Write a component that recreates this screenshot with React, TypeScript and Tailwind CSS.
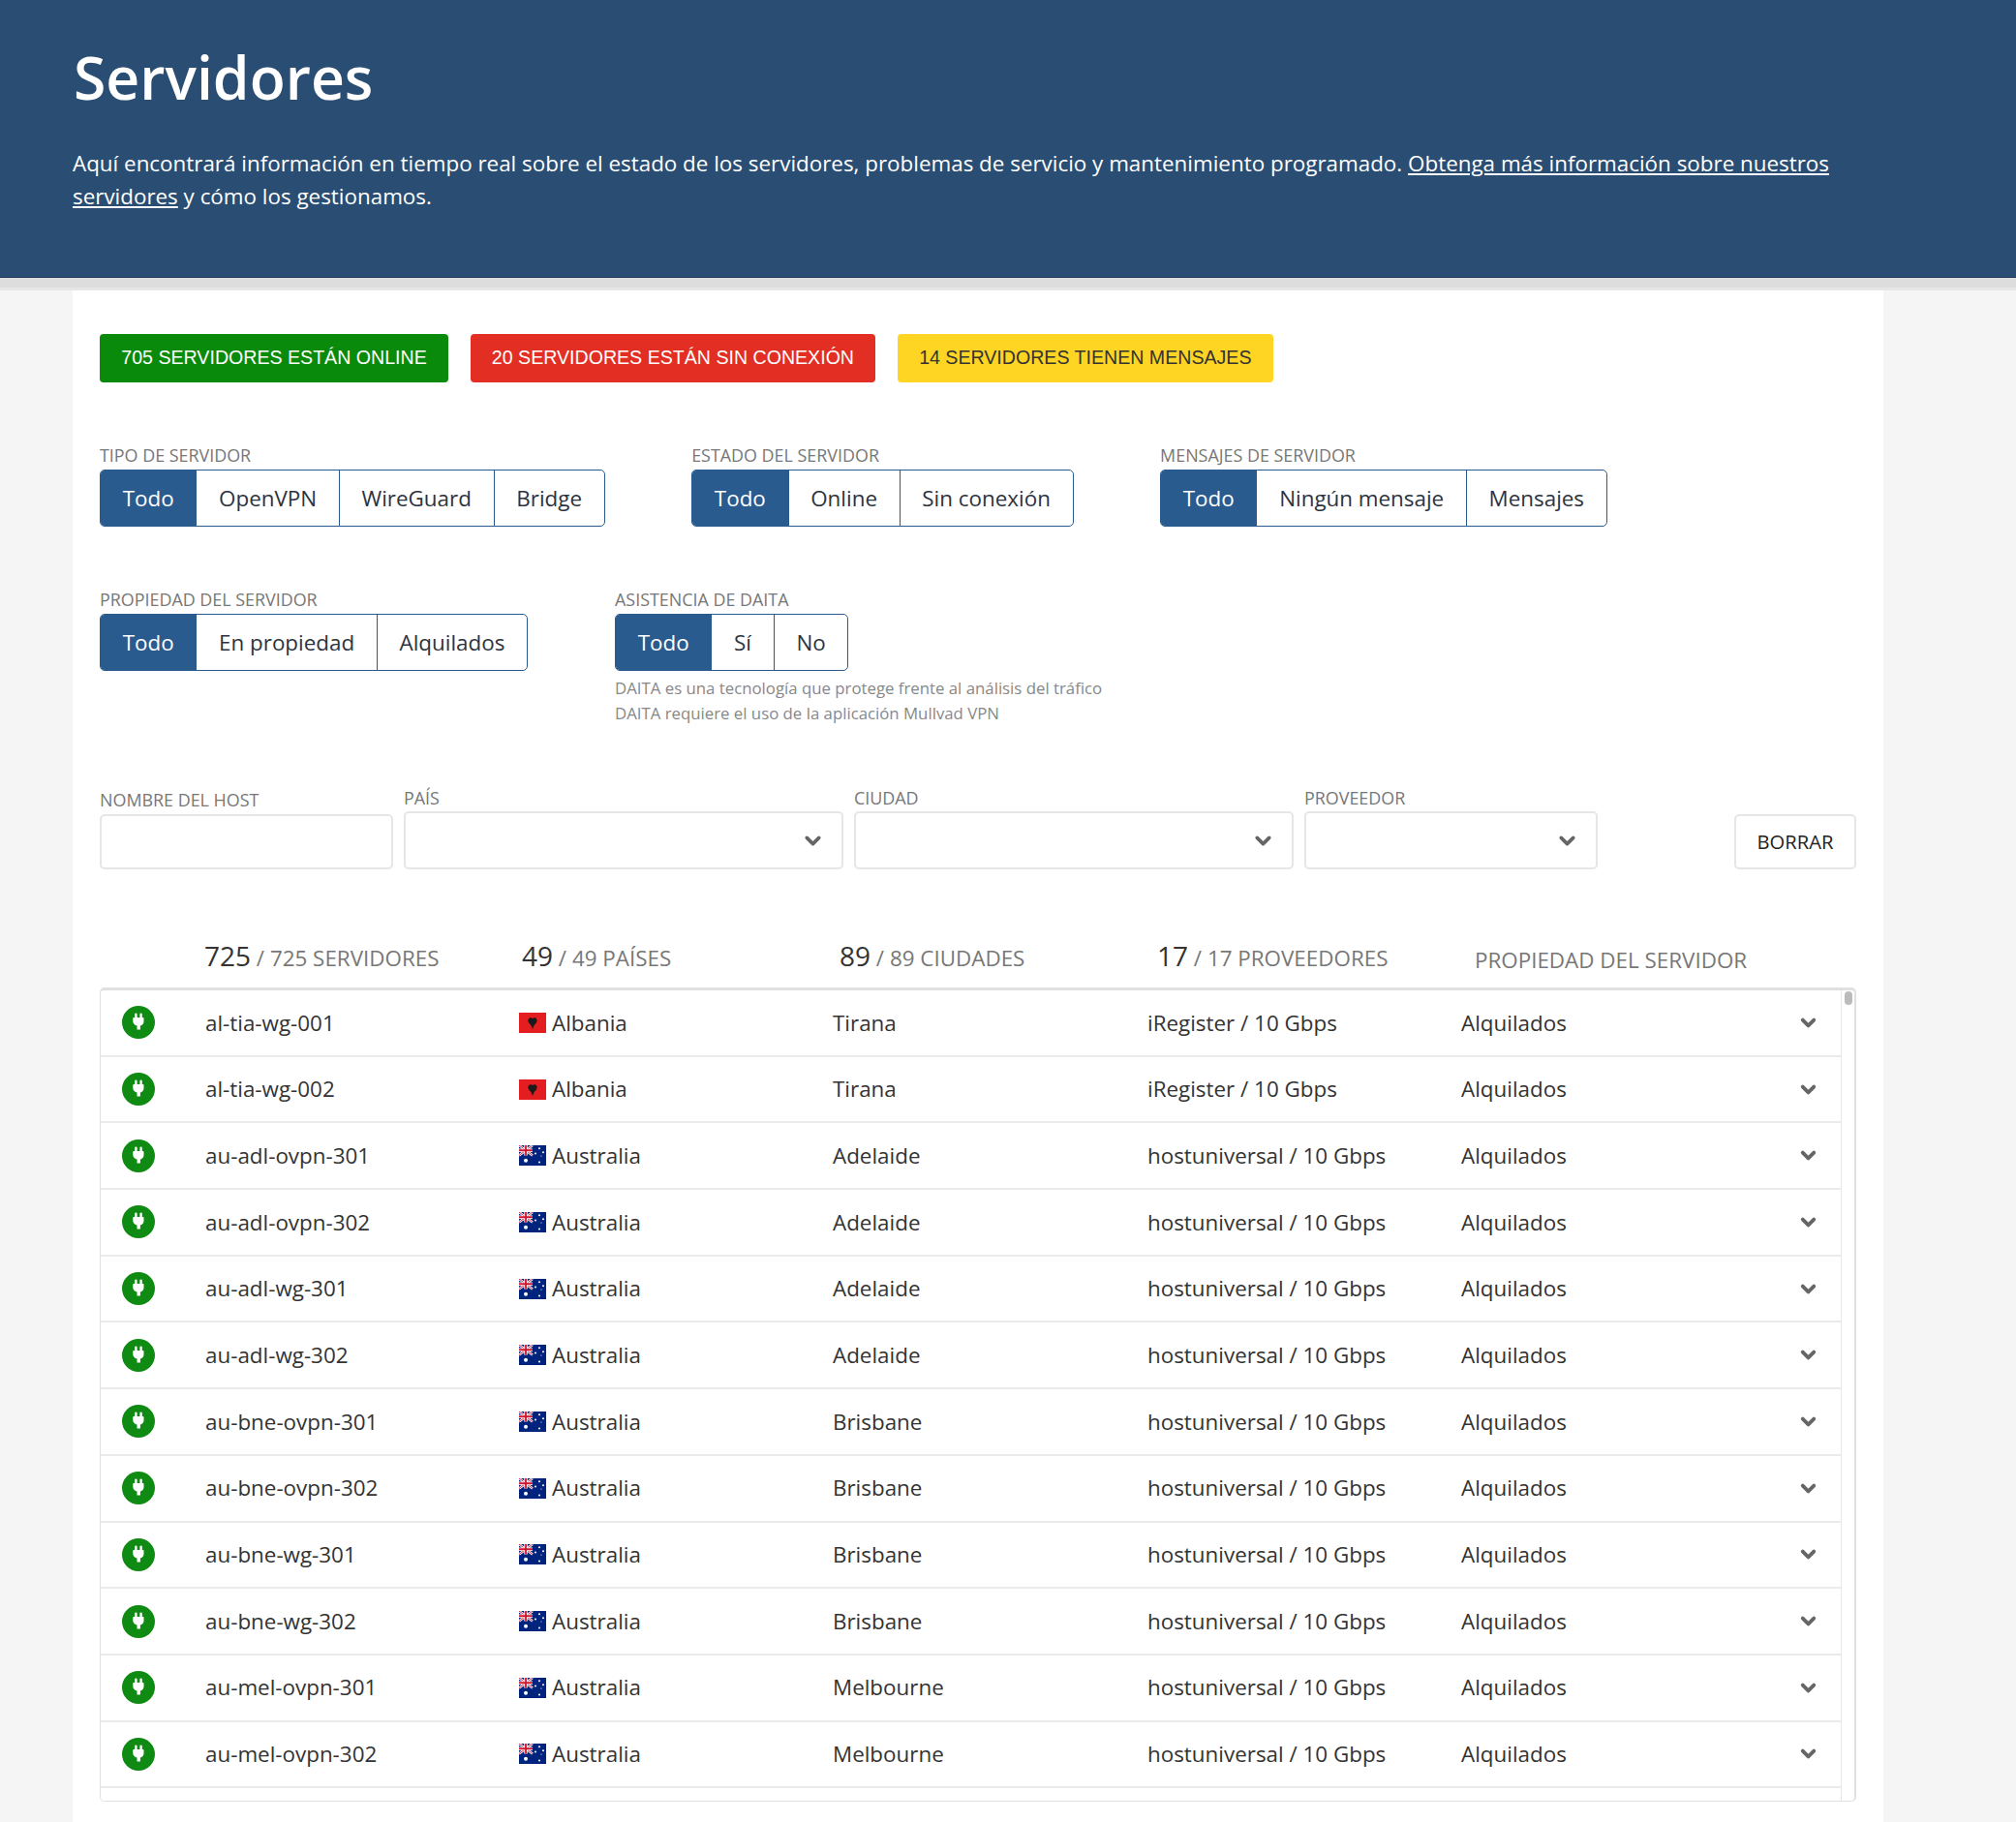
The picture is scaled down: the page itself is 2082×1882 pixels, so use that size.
import { ChevronDown } from 'lucide-react';
import { FC } from 'react';

const font = { fontFamily: '"Open Sans", sans-serif' };

const rows = [
  ['al-tia-wg-001', 'al', 'Albania', 'Tirana', 'iRegister / 10 Gbps'],
  ['al-tia-wg-002', 'al', 'Albania', 'Tirana', 'iRegister / 10 Gbps'],
  ['au-adl-ovpn-301', 'au', 'Australia', 'Adelaide', 'hostuniversal / 10 Gbps'],
  ['au-adl-ovpn-302', 'au', 'Australia', 'Adelaide', 'hostuniversal / 10 Gbps'],
  ['au-adl-wg-301', 'au', 'Australia', 'Adelaide', 'hostuniversal / 10 Gbps'],
  ['au-adl-wg-302', 'au', 'Australia', 'Adelaide', 'hostuniversal / 10 Gbps'],
  ['au-bne-ovpn-301', 'au', 'Australia', 'Brisbane', 'hostuniversal / 10 Gbps'],
  ['au-bne-ovpn-302', 'au', 'Australia', 'Brisbane', 'hostuniversal / 10 Gbps'],
  ['au-bne-wg-301', 'au', 'Australia', 'Brisbane', 'hostuniversal / 10 Gbps'],
  ['au-bne-wg-302', 'au', 'Australia', 'Brisbane', 'hostuniversal / 10 Gbps'],
  ['au-mel-ovpn-301', 'au', 'Australia', 'Melbourne', 'hostuniversal / 10 Gbps'],
  ['au-mel-ovpn-302', 'au', 'Australia', 'Melbourne', 'hostuniversal / 10 Gbps'],
];

const FlagAl = () => (
  <svg width="28" height="21" viewBox="0 0 28 21" className="shrink-0 ml-[1px]">
    <rect width="28" height="21" fill="#e41e20" />
    <path d="M9.500 7c1-2 3-2.500 4.500-1 1.500-1.500 3.500-1 4.500 1 .5 2-.5 4-2.500 5.500l-1 2-1 2.500-1-2.500-1-2c-2-1.500-3-3.500-2.500-5.500Z" fill="#1a1a1a" />
  </svg>
);

const FlagAu = () => (
  <svg width="28" height="21" viewBox="0 0 28 21" className="shrink-0 ml-[1px]">
    <rect width="28" height="21" fill="#00247d" />
    <path d="M0 0 14 10.500M14 0 0 10.500" stroke="#fff" strokeWidth="2.400" />
    <path d="M0 0 14 10.500M14 0 0 10.500" stroke="#cf142b" strokeWidth="0.900" />
    <path d="M7 0V10.500M0 5.250H14" stroke="#fff" strokeWidth="3.400" />
    <path d="M7 0V10.500M0 5.250H14" stroke="#cf142b" strokeWidth="1.800" />
    <circle cx="7" cy="15.700" r="2" fill="#fff" />
    <circle cx="21" cy="3.200" r="1" fill="#fff" />
    <circle cx="21" cy="17.600" r="1" fill="#fff" />
    <circle cx="17" cy="8.400" r="1" fill="#fff" />
    <circle cx="25" cy="7.200" r="1" fill="#fff" />
    <circle cx="23" cy="11" r="0.600" fill="#fff" />
  </svg>
);

const PlugIcon = () => (
  <svg width="34" height="34" viewBox="0 0 34 34" className="shrink-0">
    <circle cx="17" cy="17" r="17" fill="#0f8a12" />
    <path
      d="M13.200 8.800a1.200 1.200 0 0 1 2.400 0V12h2.800V8.800a1.200 1.200 0 0 1 2.400 0V12h1c.4 0 .7.300.7.700V16c0 2.500-1.600 4.100-3.600 4.500V24.500h-3.400v-4C13.500 20.100 11.300 18.500 11.300 16v-3.300c0-.4.300-.7.700-.7h1.200Z"
      fill="#fff"
    />
  </svg>
);

const Group: FC<{ label: string; items: string[] }> = ({ label, items }) => (
  <div className="w-fit">
    <div className="text-[17.900px] leading-[22px] uppercase text-[#777] mb-[3px] -translate-y-[1px]">{label}</div>
    <div className="flex h-[59px] w-fit rounded-[5px] border border-[#2a5b8e] overflow-hidden">
      {items.map((item, i) => (
        <div
          key={item}
          className={
            i === 0
              ? 'flex items-center px-[22.700px] text-[22.400px] bg-[#2a5b8e] text-white'
              : 'flex items-center px-[22.700px] text-[22.400px] text-[#2b3440] border-l border-[#2a5b8e]'
          }
        >
          {item}
        </div>
      ))}
    </div>
  </div>
);

const SelectBox: FC<{ label: string; width: string }> = ({ label, width }) => (
  <div className={width}>
    <div className="text-[17.900px] leading-[22px] uppercase text-[#777] mb-[3px]">{label}</div>
    <div className="h-[60px] rounded-[5px] border-2 border-[#e6e6e6] flex items-center justify-end pr-[17px]">
      <ChevronDown size={25} strokeWidth={3.500} color="#666" />
    </div>
  </div>
);

const Stat: FC<{ n: string; rest: string }> = ({ n, rest }) => (
  <div className="w-[328px] shrink-0">
    <span className="text-[28px] text-[#333]">{n}</span>
    <span className="text-[22.400px] text-[#777]"> / {rest}</span>
  </div>
);

export default function App() {
  return (
    <div style={font} className="h-[1882px] overflow-hidden bg-[#f5f5f5]">
      <header className="h-[287px] bg-[#294d73] border-b border-[#1d3a5c] px-[75px] pt-[40px] text-white">
        <h1 className="text-[60.700px] leading-[80px] font-semibold ml-[1px]">Servidores</h1>
        <p className="mt-[32px] pr-[100px] text-[22.400px] leading-[33.600px]">
          Aquí encontrará información en tiempo real sobre el estado de los servidores, problemas de servicio y mantenimiento programado.{' '}
          <a className="underline">Obtenga más información sobre nuestros servidores</a> y cómo los gestionamos.
        </p>
      </header>
      <div className="h-[13px] bg-[#dddddd] border-b-[3px] border-[#e6e6e6]" />

      <main className="ml-[75px] w-[1870px] h-[1582px] bg-white px-[28px] pt-[45px]">
        <div className="flex gap-[22.500px]" style={{ fontFamily: '"Liberation Sans", sans-serif' }}>
          <div className="h-[50px] flex items-center px-[22.300px] rounded-[4px] text-[19.600px] bg-[#0a8a0a] text-white">705 SERVIDORES ESTÁN ONLINE</div>
          <div className="h-[50px] flex items-center px-[22.300px] rounded-[4px] text-[19.600px] bg-[#e32e24] text-white">20 SERVIDORES ESTÁN SIN CONEXIÓN</div>
          <div className="h-[50px] flex items-center px-[22.300px] rounded-[4px] text-[19.600px] bg-[#ffd524] text-[#333]">14 SERVIDORES TIENEN MENSAJES</div>
        </div>

        <div className="flex gap-[89.500px] mt-[65px]">
          <Group label="Tipo de servidor" items={['Todo', 'OpenVPN', 'WireGuard', 'Bridge']} />
          <Group label="Estado del servidor" items={['Todo', 'Online', 'Sin conexión']} />
          <Group label="Mensajes de servidor" items={['Todo', 'Ningún mensaje', 'Mensajes']} />
        </div>

        <div className="flex gap-[90px] mt-[65px] h-[173px]">
          <Group label="Propiedad del servidor" items={['Todo', 'En propiedad', 'Alquilados']} />
          <div>
            <Group label="Asistencia de DAITA" items={['Todo', 'Sí', 'No']} />
            <div className="mt-[5px] text-[16.800px] leading-[25.500px] text-[#888]">
              <div>DAITA es una tecnología que protege frente al análisis del tráfico</div>
              <div>DAITA requiere el uso de la aplicación Mullvad VPN</div>
            </div>
          </div>
        </div>

        <div className="flex items-end gap-[11px] mt-[31px]">
          <div className="w-[303px]">
            <div className="text-[17.900px] leading-[22px] uppercase text-[#777] mb-[4px]">Nombre del host</div>
            <div className="h-[57px] rounded-[5px] border-2 border-[#e6e6e6]" />
          </div>
          <SelectBox label="País" width="w-[454px]" />
          <SelectBox label="Ciudad" width="w-[454px]" />
          <SelectBox label="Proveedor" width="w-[303px]" />
          <button className="ml-auto w-[126px] h-[57px] rounded-[5px] border-2 border-[#e6e6e6] text-[20.200px] text-[#222]">BORRAR</button>
        </div>

        <div className="flex items-baseline pl-[108px] mt-[68px] h-[54px]">
          <Stat n="725" rest="725 SERVIDORES" />
          <Stat n="49" rest="49 PAÍSES" />
          <Stat n="89" rest="89 CIUDADES" />
          <Stat n="17" rest="17 PROVEEDORES" />
          <div className="text-[22.400px] text-[#777] translate-y-[2px]">PROPIEDAD DEL SERVIDOR</div>
        </div>

        <div className="h-[841px] border border-t-[3px] border-r-[2px] border-[#e0e0e0] rounded-[5px] flex overflow-hidden">
          <div className="flex-1 border-r border-[#e8e8e8]">
            {rows.map((r) => (
              <div
                key={r[0]}
                className="h-[68.700px] border-b-2 border-[#ebebeb] grid grid-cols-[108px_323px_325px_325px_324px_1fr_60px] items-center text-[22.400px] text-[#333]"
              >
                <div className="pl-[22px]">
                  <PlugIcon />
                </div>
                <div>{r[0]}</div>
                <div className="flex items-center gap-[6px]">
                  {r[1] === 'al' ? <FlagAl /> : <FlagAu />}
                  {r[2]}
                </div>
                <div>{r[3]}</div>
                <div>{r[4]}</div>
                <div>Alquilados</div>
                <div className="flex justify-end pr-[22px]">
                  <ChevronDown size={23} strokeWidth={4} color="#666" />
                </div>
              </div>
            ))}
          </div>
          <div className="w-[13px] pt-[1px] pl-[3px]">
            <div className="w-[8px] h-[14px] rounded-full bg-[#bbbbbb]" />
          </div>
        </div>
      </main>
    </div>
  );
}
